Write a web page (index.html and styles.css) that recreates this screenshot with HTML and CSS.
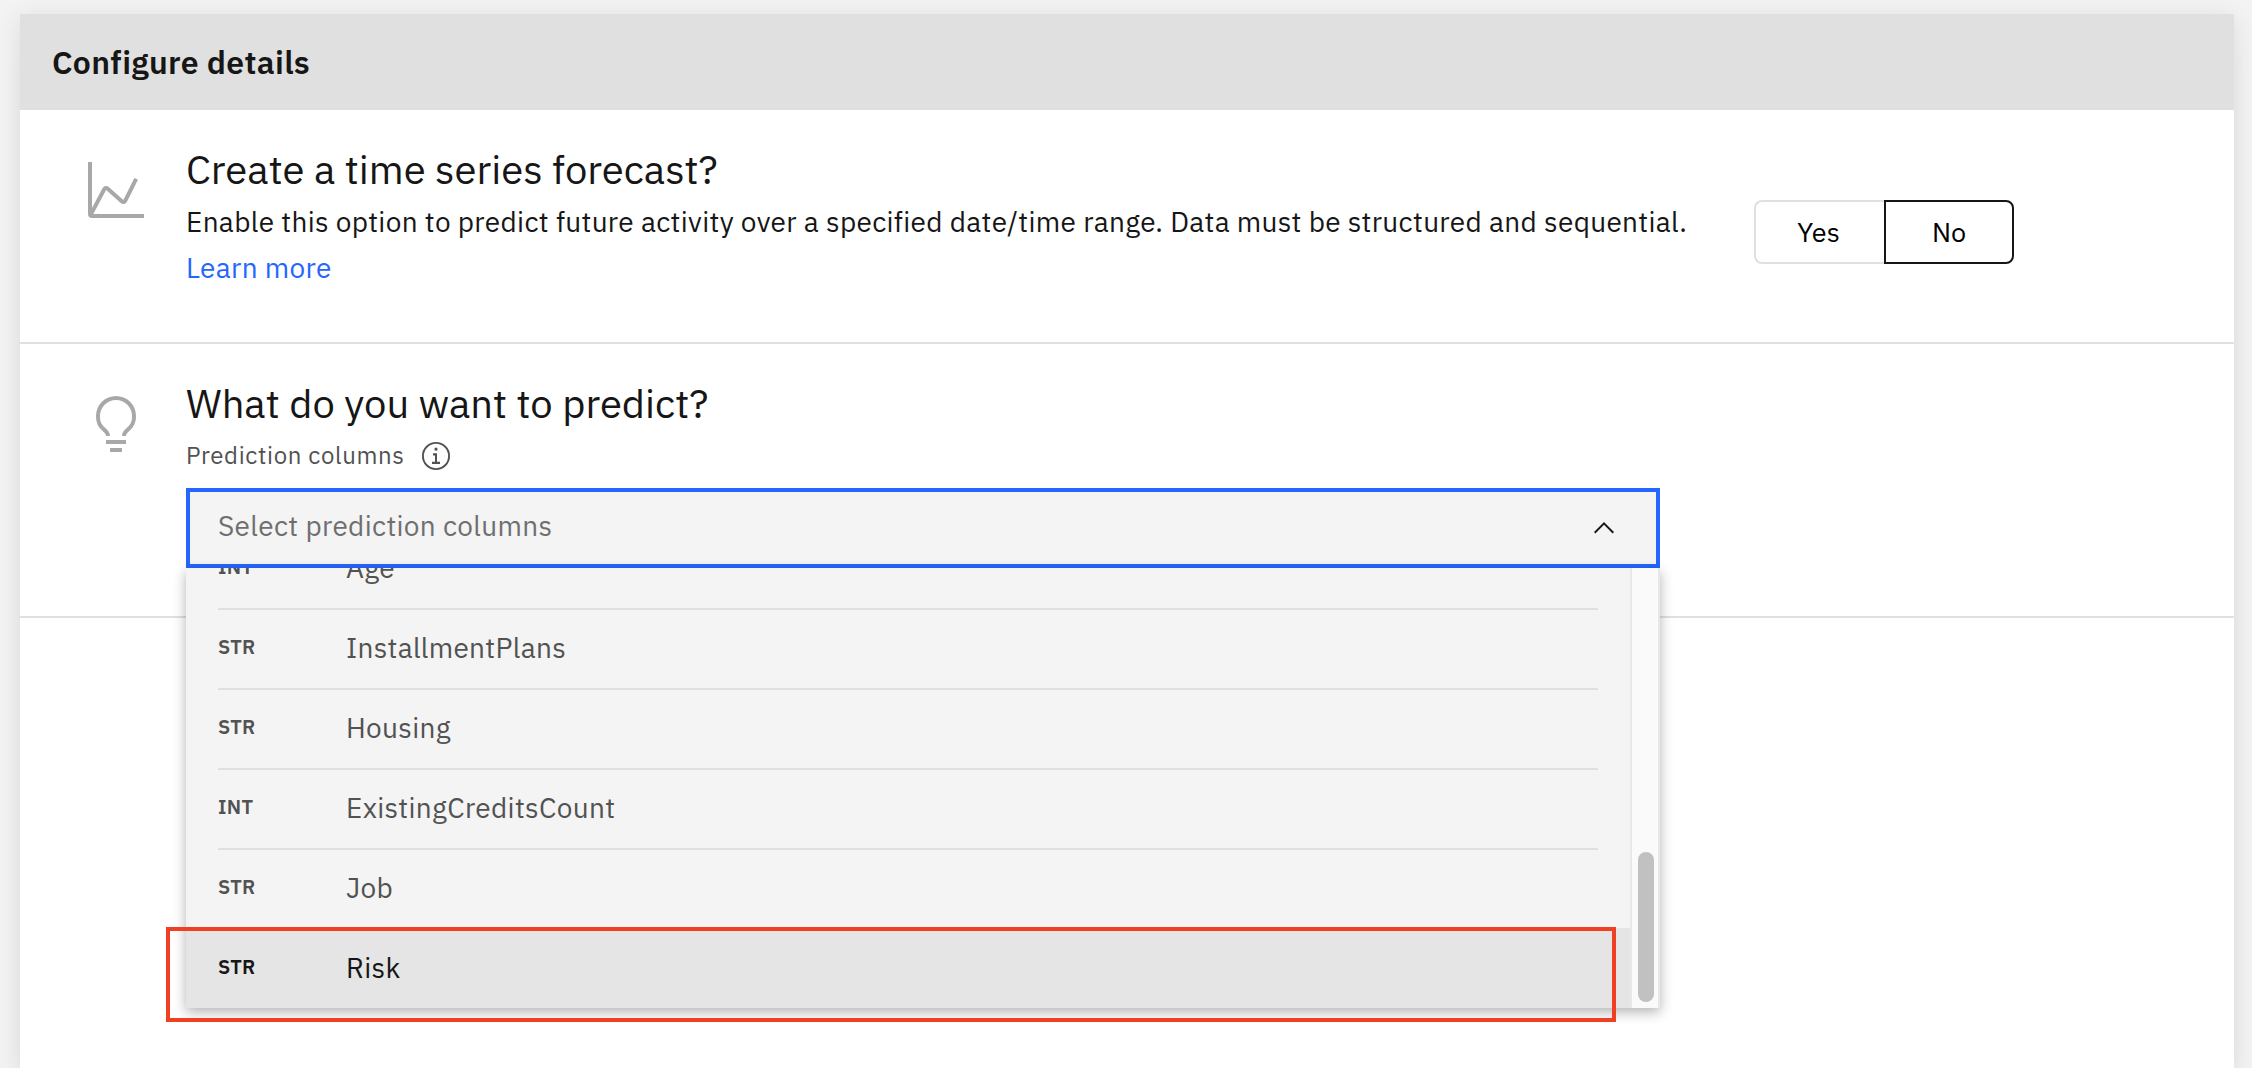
FILE: index.html
```html
<!DOCTYPE html>
<html lang="en">
<head>
<meta charset="utf-8">
<title>Configure details</title>
<link rel="stylesheet" href="styles.css">
</head>
<body>
<main class="panel">
  <header class="panel-header"><h1>Configure details</h1></header>
  <section class="section forecast">
    <svg class="section-icon" viewBox="0 0 32 32" fill="currentColor"><path d="M4.67 28l6.39-12 7.3 6.49a2 2 0 0 0 1.7.47 2 2 0 0 0 1.42-1.07L27 10.9l-1.82-.9-5.49 11-7.3-6.49a2 2 0 0 0-1.68-.51 2 2 0 0 0-1.42 1L4 25V2H2v26a2 2 0 0 0 2 2h26v-2Z"/></svg>
    <div class="copy">
      <h2>Create a time series forecast?</h2>
      <p>Enable this option to predict future activity over a specified date/time range. Data must be structured and sequential.</p>
      <a class="link">Learn more</a>
    </div>
    <div class="switch">
      <button class="yes">Yes</button><button class="no">No</button>
    </div>
  </section>
  <section class="section predict">
    <svg class="section-icon" viewBox="0 0 32 32" fill="currentColor"><path d="M11 24h10v2H11zM13 28h6v2h-6zM16 2A10 10 0 0 0 6 12a9.19 9.19 0 0 0 3.46 7.62c1 .93 1.54 1.46 1.54 2.38h2c0-1.84-1.11-2.87-2.19-3.86A7.2 7.2 0 0 1 8 12a8 8 0 0 1 16 0 7.2 7.2 0 0 1-2.82 6.14c-1.07 1-2.18 2-2.18 3.86h2c0-.92.53-1.45 1.54-2.39A9.18 9.18 0 0 0 26 12 10 10 0 0 0 16 2Z"/></svg>
    <div class="copy">
      <h2>What do you want to predict?</h2>
      <div class="label"><span>Prediction columns</span>
        <svg class="info" viewBox="0 0 32 32"><circle cx="16" cy="16" r="13.1" fill="none" stroke="currentColor" stroke-width="1.9"/><path d="M13 13.2h4v8.6h3V24h-8v-2.2h3v-6.4h-2zM16 7.6a1.6 1.6 0 1 1 0 3.2 1.6 1.6 0 0 1 0-3.2z" fill="currentColor"/></svg>
      </div>
      <div class="combo">
        <div class="field"><span>Select prediction columns</span>
          <svg class="chevron" viewBox="0 0 16 16"><path d="M8 5l5 5-.7.7L8 6.4l-4.3 4.3L3 10z"/></svg>
        </div>
        <div class="menu">
          <ul class="options">
            <li><b>INT</b><span>Age</span></li>
            <li><b>STR</b><span>InstallmentPlans</span></li>
            <li><b>STR</b><span>Housing</span></li>
            <li><b>INT</b><span>ExistingCreditsCount</span></li>
            <li><b>STR</b><span>Job</span></li>
            <li class="active"><b>STR</b><span>Risk</span></li>
          </ul>
          <div class="track"><div class="thumb"></div></div>
        </div>
        <div class="marker"></div>
      </div>
    </div>
  </section>
</main>
</body>
</html>
```
FILE: styles.css
```css
* { box-sizing: border-box; }
body {
  margin: 0;
  height: 1068px;
  overflow: hidden;
  padding: 14px 18px 0 20px;
  background: #f3f3f3;
  color: #161616;
  font-family: "IBM Plex Sans", Roboto, sans-serif;
  font-size: 28px;
  letter-spacing: .32px;
}
h1, h2, p, ul { margin: 0; padding: 0; }
.panel {
  height: 1054px;
  background: #fff;
  box-shadow: 0 4px 24px rgba(0, 0, 0, .1), 0 40px 24px rgba(0, 0, 0, .02);
}
.panel-header {
  display: flex;
  align-items: center;
  height: 96px;
  padding-left: 32px;
  background: #e0e0e0;
}
h1 { font-size: 32px; font-weight: 600; line-height: 40px; }
.section {
  display: flex;
  align-items: flex-start;
  padding-left: 64px;
  border-bottom: 2px solid #e0e0e0;
}
.forecast { height: 234px; padding-top: 34px; }
.predict { height: 274px; padding-top: 34px; }
.section-icon { width: 64px; height: 64px; margin-top: 14px; color: #a8a8a8; flex: none; }
.copy { width: 1568px; margin-left: 38px; flex: none; }
h2 {
  font-size: 40px;
  font-weight: 400;
  line-height: 50px;
  letter-spacing: 0;
  white-space: nowrap;
}
p, .link { display: block; line-height: 46px; white-space: nowrap; }
p { margin-top: 5px; }
.link { color: #2466fe; }
.switch { display: flex; margin-top: 56px; }
.switch button {
  width: 130px;
  height: 64px;
  padding: 0 0 2px;
  background: #fff;
  border: 2px solid #e0e0e0;
  color: #000;
  font-family: inherit;
  font-size: 27px;
}
.switch .yes { padding-right: 3px; border-radius: 8px 0 0 8px; border-right: 0; }
.switch .no { border-radius: 0 8px 8px 0; border-color: #161616; }
.label {
  display: flex;
  align-items: center;
  height: 48px;
  margin-top: 3px;
  gap: 15px;
  font-size: 24px;
  letter-spacing: .64px;
  color: #525252;
}
.info { width: 32px; height: 32px; margin-top: 2px; }
.combo { position: relative; width: 1474px; margin-top: 9px; }
.field {
  display: flex;
  align-items: center;
  justify-content: space-between;
  height: 80px;
  padding: 0 36px 0 28px;
  background: #f4f4f4;
  border: 4px solid #2466fe;
  color: #6f6f6f;
}
.field span { margin-bottom: 5px; }
.chevron { width: 32px; height: 32px; fill: #161616; }
.menu {
  position: absolute;
  top: 80px;
  left: 0;
  display: flex;
  width: 1474px;
  height: 440px;
  background: #f4f4f4;
  box-shadow: 0 4px 12px rgba(0, 0, 0, .3);
}
.options {
  display: flex;
  flex: 1;
  flex-direction: column;
  justify-content: flex-end;
  overflow: hidden;
  list-style: none;
}
.options li {
  display: flex;
  flex: none;
  align-items: center;
  height: 80px;
  margin-left: 32px;
  margin-right: 32px;
  border-top: 2px solid #e0e0e0;
  color: #525252;
}
.options span { margin-bottom: 3px; }
.options b { width: 128px; margin-bottom: 6px; font-size: 20px; font-weight: 600; }
.options .active { margin: 0; padding: 0 32px; border-color: #e5e5e5; background: #e5e5e5; color: #161616; }
.track { width: 30px; padding: 284px 4px 0 6px; background: #fafafa; border: solid #e8e8e8; border-width: 0 2px; }
.thumb { width: 16px; height: 150px; border-radius: 8px; background: #c1c1c1; }
.marker {
  position: absolute;
  top: 439px;
  left: -20px;
  width: 1450px;
  height: 95px;
  border: 4px solid #ef4023;
}
```
